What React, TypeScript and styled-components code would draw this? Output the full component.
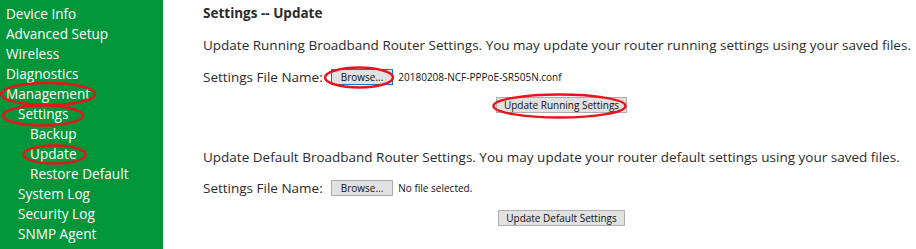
import React from "react";
import styled, { createGlobalStyle } from "styled-components";

const Global = createGlobalStyle`
  html, body { margin: 0; padding: 0; background: #fff; }
  body { font-family: "Open Sans", "DejaVu Sans", sans-serif; }
`;

const Page = styled.div`
  position: relative;
  display: flex;
  width: 916px;
  height: 249px;
  overflow: hidden;
`;

const Sidebar = styled.nav`
  width: 163px;
  flex: none;
  background: #02963a;
  padding-top: 4px;
  box-sizing: border-box;
`;

const MenuItem = styled.div<{ $level: number }>`
  height: 20px;
  line-height: 20px;
  padding-left: ${(p) => 6 + p.$level * 12}px;
  color: #fff;
  font-size: 13.6px;
  white-space: nowrap;
`;

const Content = styled.main`
  flex: 1;
  padding-left: 40px;
  color: #2b2b2b;
  font-size: 13.5px;
`;

const Title = styled.h1`
  margin: 0;
  height: 26px;
  line-height: 26px;
  font-size: 13.5px;
  font-weight: bold;
`;

const Para = styled.p<{ $h: number }>`
  margin: 0;
  height: ${(p) => p.$h}px;
  line-height: ${(p) => p.$h}px;
  white-space: nowrap;
`;

const FileRow = styled.div`
  display: flex;
  align-items: center;
  height: 26px;
  white-space: nowrap;
`;

const Label = styled.span`
  margin-right: 8px;
`;

const Button = styled.button<{ $focused?: boolean; $wide?: boolean }>`
  font-family: inherit;
  font-size: 10px;
  color: #111;
  height: 16px;
  line-height: 12px;
  padding: 0 ${(p) => (p.$wide ? 7 : 9)}px;
  background: #e1e1e1;
  border: 1px solid ${(p) => (p.$focused ? "#0078d7" : "#adadad")};
  border-radius: 0;
  cursor: pointer;
`;

const FileName = styled.span`
  font-size: 10px;
  margin-left: 5px;
  color: #111;
`;

const ButtonRow = styled.div<{ $h: number }>`
  display: flex;
  justify-content: center;
  width: 717px;
  height: ${(p) => p.$h}px;
  align-items: center;
`;

const Spacer = styled.div<{ $h: number }>`
  height: ${(p) => p.$h}px;
`;

const Marks = styled.svg`
  position: absolute;
  left: 0;
  top: 0;
  pointer-events: none;
`;

const menu: [string, number][] = [
  ["Device Info", 0],
  ["Advanced Setup", 0],
  ["Wireless", 0],
  ["Diagnostics", 0],
  ["Management", 0],
  ["Settings", 1],
  ["Backup", 2],
  ["Update", 2],
  ["Restore Default", 2],
  ["System Log", 1],
  ["Security Log", 1],
  ["SNMP Agent", 1],
];

const ellipses = [
  { cx: 48, cy: 94, rx: 47, ry: 11 },
  { cx: 43, cy: 115.5, rx: 40, ry: 10 },
  { cx: 54.5, cy: 154.5, rx: 31, ry: 9 },
  { cx: 359, cy: 77.5, rx: 34, ry: 10 },
  { cx: 559.5, cy: 106, rx: 66, ry: 11.5 },
];

export default function App() {
  return (
    <>
      <Global />
      <Page>
        <Sidebar>
          {menu.map(([t, l]) => (
            <MenuItem key={t} $level={l}>
              {t}
            </MenuItem>
          ))}
        </Sidebar>
        <Content>
          <Title>Settings -- Update</Title>
          <Para $h={38}>
            Update Running Broadband Router Settings. You may update your router running settings using your saved files.
          </Para>
          <FileRow>
            <Label>Settings File Name:</Label>
            <Button $focused>Browse...</Button>
            <FileName>20180208-NCF-PPPoE-SR505N.conf</FileName>
          </FileRow>
          <ButtonRow $h={30}>
            <Button $wide>Update Running Settings</Button>
          </ButtonRow>
          <Spacer $h={19} />
          <Para $h={36}>
            Update Default Broadband Router Settings. You may update your router default settings using your saved files.
          </Para>
          <FileRow>
            <Label>Settings File Name:</Label>
            <Button>Browse...</Button>
            <FileName>No file selected.</FileName>
          </FileRow>
          <Spacer $h={2} />
          <ButtonRow $h={30}>
            <Button $wide>Update Default Settings</Button>
          </ButtonRow>
        </Content>
        <Marks width={916} height={249}>
          {ellipses.map((e, i) => (
            <ellipse key={i} {...e} fill="none" stroke="#e8141b" strokeWidth={2.5} />
          ))}
        </Marks>
      </Page>
    </>
  );
}
